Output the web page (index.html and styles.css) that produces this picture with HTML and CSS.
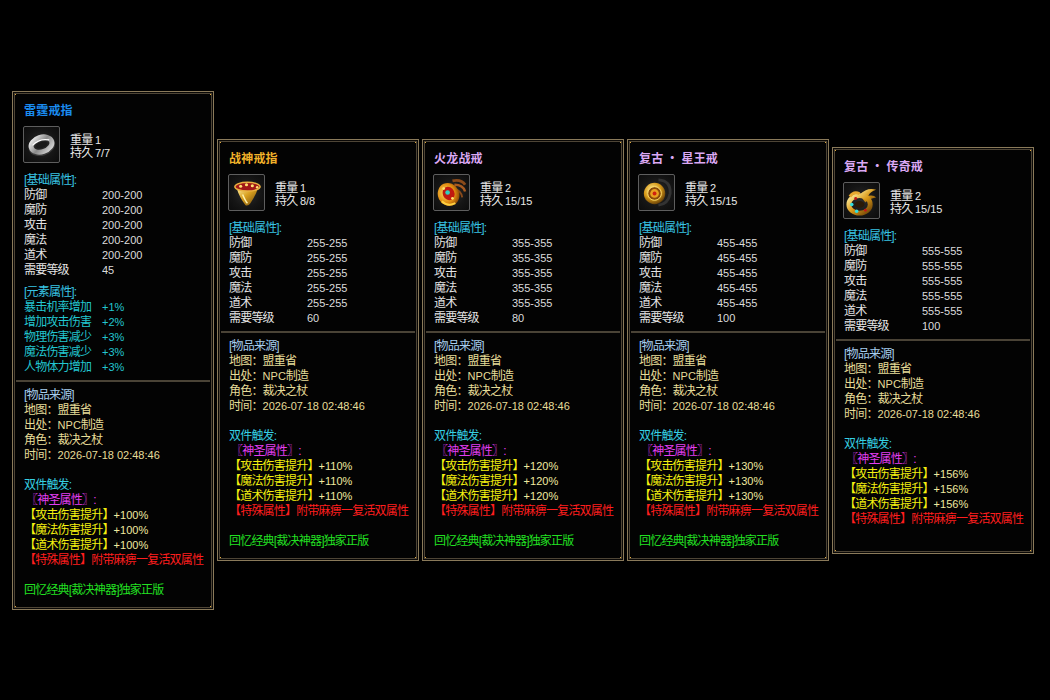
FILE: index.html
```html
<!DOCTYPE html>
<html lang="zh">
<head>
<meta charset="utf-8">
<title>戒指属性</title>
<link rel="stylesheet" href="styles.css">
</head>
<body>
<div class="stage">

  <div class="card">
    <div class="title t-blue">雷霆戒指</div>
    <div class="head">
      <div class="icon">
        <svg viewBox="0 0 36 36" width="35" height="35">
          <defs>
            <linearGradient id="sv" x1="0" y1="0" x2="1" y2="1">
              <stop offset="0" stop-color="#f4f4f4"/>
              <stop offset="0.5" stop-color="#8a8a8a"/>
              <stop offset="1" stop-color="#dcdcdc"/>
            </linearGradient>
          </defs>
          <g transform="rotate(-18 18 18)">
            <ellipse cx="18" cy="19" rx="11" ry="7.5" fill="none" stroke="#3a3a3a" stroke-width="6"/>
            <ellipse cx="18" cy="18" rx="11" ry="7.5" fill="none" stroke="url(#sv)" stroke-width="5"/>
            <path d="M9 16 Q18 11 27 16" stroke="#ffffff" stroke-width="1.2" fill="none"/>
            <ellipse cx="18" cy="18.5" rx="6" ry="3" fill="#1a1a1a"/>
          </g>
        </svg>
      </div>
      <div class="stats">
        <div>重量 <span class="num">1</span></div>
        <div>持久 <span class="num">7/7</span></div>
      </div>
    </div>
    <div class="sec-h">[基础属性]:</div>
    <div class="grid">
      <span>防御</span><span class="num">200-200</span>
      <span>魔防</span><span class="num">200-200</span>
      <span>攻击</span><span class="num">200-200</span>
      <span>魔法</span><span class="num">200-200</span>
      <span>道术</span><span class="num">200-200</span>
      <span>需要等级</span><span class="num">45</span>
    </div>
    <div class="sec-h el">[元素属性]:</div>
    <div class="grid cyan">
      <span>暴击机率增加</span><span class="num">+1%</span>
      <span>增加攻击伤害</span><span class="num">+2%</span>
      <span>物理伤害减少</span><span class="num">+3%</span>
      <span>魔法伤害减少</span><span class="num">+3%</span>
      <span>人物体力增加</span><span class="num">+3%</span>
    </div>
    <div class="sep"></div>
    <div class="src-h">[物品来源]</div>
    <div class="src">地图：盟重省</div>
    <div class="src">出处：<span class="num">NPC</span>制造</div>
    <div class="src">角色：裁决之杖</div>
    <div class="src">时间：<span class="num">2026-07-18 02:48:46</span></div>
    <div class="blank"></div>
    <div class="trig">双件触发:</div>
    <div class="holy">〖神圣属性〗:</div>
    <div class="bonus">【攻击伤害提升】<span class="pct">+100%</span></div>
    <div class="bonus">【魔法伤害提升】<span class="pct">+100%</span></div>
    <div class="bonus">【道术伤害提升】<span class="pct">+100%</span></div>
    <div class="special">【特殊属性】附带麻痹一复活双属性</div>
    <div class="blank"></div>
    <div class="promo">回忆经典[裁决神器]独家正版</div>
  </div>

  <div class="card">
    <div class="title t-gold">战神戒指</div>
    <div class="head">
      <div class="icon">
        <svg viewBox="0 0 36 36" width="35" height="35">
          <defs>
            <linearGradient id="gd2" x1="0" y1="0" x2="1" y2="1">
              <stop offset="0" stop-color="#fff0a0"/>
              <stop offset="0.45" stop-color="#d9a020"/>
              <stop offset="1" stop-color="#6a4408"/>
            </linearGradient>
          </defs>
          <path d="M8 14 Q11 24 17 31 Q20 32 22 29 Q27 22 30 13 Z" fill="url(#gd2)"/>
          <path d="M14 20 Q17 27 19 29" stroke="#fff4b0" stroke-width="1.5" fill="none"/>
          <ellipse cx="19" cy="12" rx="13" ry="4.5" fill="#a01818" stroke="#e8b040" stroke-width="1.5"/>
          <circle cx="12" cy="11.5" r="1.6" fill="#ffe070"/>
          <circle cx="18" cy="10" r="1.6" fill="#ffe070"/>
          <circle cx="24" cy="11" r="1.6" fill="#ffe070"/>
          <circle cx="29" cy="12.5" r="1.3" fill="#ffe070"/>
        </svg>
      </div>
      <div class="stats">
        <div>重量 <span class="num">1</span></div>
        <div>持久 <span class="num">8/8</span></div>
      </div>
    </div>
    <div class="sec-h">[基础属性]:</div>
    <div class="grid">
      <span>防御</span><span class="num">255-255</span>
      <span>魔防</span><span class="num">255-255</span>
      <span>攻击</span><span class="num">255-255</span>
      <span>魔法</span><span class="num">255-255</span>
      <span>道术</span><span class="num">255-255</span>
      <span>需要等级</span><span class="num">60</span>
    </div>
    <div class="sep"></div>
    <div class="src-h">[物品来源]</div>
    <div class="src">地图：盟重省</div>
    <div class="src">出处：<span class="num">NPC</span>制造</div>
    <div class="src">角色：裁决之杖</div>
    <div class="src">时间：<span class="num">2026-07-18 02:48:46</span></div>
    <div class="blank"></div>
    <div class="trig">双件触发:</div>
    <div class="holy">〖神圣属性〗:</div>
    <div class="bonus">【攻击伤害提升】<span class="pct">+110%</span></div>
    <div class="bonus">【魔法伤害提升】<span class="pct">+110%</span></div>
    <div class="bonus">【道术伤害提升】<span class="pct">+110%</span></div>
    <div class="special">【特殊属性】附带麻痹一复活双属性</div>
    <div class="blank"></div>
    <div class="promo">回忆经典[裁决神器]独家正版</div>
  </div>

  <div class="card">
    <div class="title t-lav">火龙战戒</div>
    <div class="head">
      <div class="icon">
        <svg viewBox="0 0 36 36" width="35" height="35">
          <defs>
            <radialGradient id="gd3" cx="0.4" cy="0.4" r="0.7">
              <stop offset="0" stop-color="#ffe060"/>
              <stop offset="0.6" stop-color="#e08a10"/>
              <stop offset="1" stop-color="#7a3a04"/>
            </radialGradient>
          </defs>
          <path d="M19 6 Q28 4 32 10" stroke="#8a4a1a" stroke-width="3" fill="none"/>
          <path d="M21 10 Q30 10 32 17" stroke="#a85a20" stroke-width="2.5" fill="none"/>
          <path d="M21 14 Q28 16 29 23" stroke="#8a4a1a" stroke-width="2" fill="none"/>
          <ellipse cx="15" cy="20" rx="11" ry="12" fill="url(#gd3)" transform="rotate(-25 15 20)"/>
          <ellipse cx="15" cy="19" rx="6" ry="7" fill="#c01810" transform="rotate(-25 15 19)"/>
          <circle cx="14" cy="18" r="2.4" fill="#30d0c0"/>
          <circle cx="10" cy="14" r="1.4" fill="#ffe070"/>
          <circle cx="19" cy="24" r="1.4" fill="#ffe070"/>
          <path d="M8 27 Q14 33 22 29" stroke="#ffd040" stroke-width="2" fill="none"/>
        </svg>
      </div>
      <div class="stats">
        <div>重量 <span class="num">2</span></div>
        <div>持久 <span class="num">15/15</span></div>
      </div>
    </div>
    <div class="sec-h">[基础属性]:</div>
    <div class="grid">
      <span>防御</span><span class="num">355-355</span>
      <span>魔防</span><span class="num">355-355</span>
      <span>攻击</span><span class="num">355-355</span>
      <span>魔法</span><span class="num">355-355</span>
      <span>道术</span><span class="num">355-355</span>
      <span>需要等级</span><span class="num">80</span>
    </div>
    <div class="sep"></div>
    <div class="src-h">[物品来源]</div>
    <div class="src">地图：盟重省</div>
    <div class="src">出处：<span class="num">NPC</span>制造</div>
    <div class="src">角色：裁决之杖</div>
    <div class="src">时间：<span class="num">2026-07-18 02:48:46</span></div>
    <div class="blank"></div>
    <div class="trig">双件触发:</div>
    <div class="holy">〖神圣属性〗:</div>
    <div class="bonus">【攻击伤害提升】<span class="pct">+120%</span></div>
    <div class="bonus">【魔法伤害提升】<span class="pct">+120%</span></div>
    <div class="bonus">【道术伤害提升】<span class="pct">+120%</span></div>
    <div class="special">【特殊属性】附带麻痹一复活双属性</div>
    <div class="blank"></div>
    <div class="promo">回忆经典[裁决神器]独家正版</div>
  </div>

  <div class="card">
    <div class="title t-lav">复古 · 星王戒</div>
    <div class="head">
      <div class="icon">
        <svg viewBox="0 0 36 36" width="35" height="35">
          <defs>
            <radialGradient id="gd4" cx="0.4" cy="0.35" r="0.7">
              <stop offset="0" stop-color="#fff2a0"/>
              <stop offset="0.55" stop-color="#d89a18"/>
              <stop offset="1" stop-color="#5a3606"/>
            </radialGradient>
          </defs>
          <path d="M20 5 Q33 6 32 19 Q30 30 20 31" stroke="#333" stroke-width="3" fill="none"/>
          <circle cx="16" cy="19" r="11" fill="url(#gd4)"/>
          <circle cx="16" cy="19" r="7" fill="#8a4a08" stroke="#ffe070" stroke-width="1"/>
          <circle cx="16" cy="19" r="4.5" fill="#e8a020"/>
          <circle cx="16" cy="19" r="2" fill="#d02010"/>
        </svg>
      </div>
      <div class="stats">
        <div>重量 <span class="num">2</span></div>
        <div>持久 <span class="num">15/15</span></div>
      </div>
    </div>
    <div class="sec-h">[基础属性]:</div>
    <div class="grid">
      <span>防御</span><span class="num">455-455</span>
      <span>魔防</span><span class="num">455-455</span>
      <span>攻击</span><span class="num">455-455</span>
      <span>魔法</span><span class="num">455-455</span>
      <span>道术</span><span class="num">455-455</span>
      <span>需要等级</span><span class="num">100</span>
    </div>
    <div class="sep"></div>
    <div class="src-h">[物品来源]</div>
    <div class="src">地图：盟重省</div>
    <div class="src">出处：<span class="num">NPC</span>制造</div>
    <div class="src">角色：裁决之杖</div>
    <div class="src">时间：<span class="num">2026-07-18 02:48:46</span></div>
    <div class="blank"></div>
    <div class="trig">双件触发:</div>
    <div class="holy">〖神圣属性〗:</div>
    <div class="bonus">【攻击伤害提升】<span class="pct">+130%</span></div>
    <div class="bonus">【魔法伤害提升】<span class="pct">+130%</span></div>
    <div class="bonus">【道术伤害提升】<span class="pct">+130%</span></div>
    <div class="special">【特殊属性】附带麻痹一复活双属性</div>
    <div class="blank"></div>
    <div class="promo">回忆经典[裁决神器]独家正版</div>
  </div>

  <div class="card">
    <div class="title t-lav">复古 · 传奇戒</div>
    <div class="head">
      <div class="icon">
        <svg viewBox="0 0 36 36" width="35" height="35">
          <defs>
            <linearGradient id="gd5" x1="0" y1="0" x2="1" y2="1">
              <stop offset="0" stop-color="#fff0a0"/>
              <stop offset="0.5" stop-color="#d89818"/>
              <stop offset="1" stop-color="#6a4006"/>
            </linearGradient>
          </defs>
          <path d="M16 12 Q24 4 33 7 Q27 9 25 13 Q31 12 33 15 Q26 16 22 20" fill="url(#gd5)"/>
          <ellipse cx="16" cy="22" rx="11" ry="9" fill="none" stroke="url(#gd5)" stroke-width="5"/>
          <path d="M6 14 Q10 8 16 11" stroke="#e8a830" stroke-width="3" fill="none"/>
          <circle cx="8" cy="22" r="1.8" fill="#30e0e0"/>
          <circle cx="13" cy="29" r="1.8" fill="#30e0e0"/>
          <circle cx="22" cy="28" r="1.5" fill="#c01818"/>
          <circle cx="12" cy="16" r="1.5" fill="#c01818"/>
          <ellipse cx="16" cy="22" rx="5" ry="3.5" fill="#2a1a08"/>
        </svg>
      </div>
      <div class="stats">
        <div>重量 <span class="num">2</span></div>
        <div>持久 <span class="num">15/15</span></div>
      </div>
    </div>
    <div class="sec-h">[基础属性]:</div>
    <div class="grid">
      <span>防御</span><span class="num">555-555</span>
      <span>魔防</span><span class="num">555-555</span>
      <span>攻击</span><span class="num">555-555</span>
      <span>魔法</span><span class="num">555-555</span>
      <span>道术</span><span class="num">555-555</span>
      <span>需要等级</span><span class="num">100</span>
    </div>
    <div class="sep"></div>
    <div class="src-h">[物品来源]</div>
    <div class="src">地图：盟重省</div>
    <div class="src">出处：<span class="num">NPC</span>制造</div>
    <div class="src">角色：裁决之杖</div>
    <div class="src">时间：<span class="num">2026-07-18 02:48:46</span></div>
    <div class="blank"></div>
    <div class="trig">双件触发:</div>
    <div class="holy">〖神圣属性〗:</div>
    <div class="bonus">【攻击伤害提升】<span class="pct">+156%</span></div>
    <div class="bonus">【魔法伤害提升】<span class="pct">+156%</span></div>
    <div class="bonus">【道术伤害提升】<span class="pct">+156%</span></div>
    <div class="special">【特殊属性】附带麻痹一复活双属性</div>
    <div class="blank"></div>
  </div>

</div>
</body>
</html>
```

FILE: styles.css
```css
html, body {
  margin: 0;
  padding: 0;
  background: #000;
}

.stage {
  height: 700px;
  box-sizing: border-box;
  padding-left: 12px;
  display: flex;
  align-items: center;
  gap: 3px;
}

.card {
  width: 202px;
  box-sizing: border-box;
  padding: 10px 10px 11px 11px;
  border: 1px solid #8a7a5a;
  box-shadow: inset 0 0 0 1px #0a0806, inset 0 0 0 2px #4e4536;
  background:
    linear-gradient(#e0a83a, #e0a83a) left top / 3px 3px no-repeat,
    linear-gradient(#e0a83a, #e0a83a) right top / 3px 3px no-repeat,
    linear-gradient(#e0a83a, #e0a83a) left bottom / 3px 3px no-repeat,
    linear-gradient(#e0a83a, #e0a83a) right bottom / 3px 3px no-repeat,
    #030303;
  color: #e4e4e4;
  font: 12px/15px "Liberation Sans", "Noto Sans CJK SC", sans-serif;
  letter-spacing: -0.8px;
  white-space: nowrap;
}

.title {
  font-family: "Noto Sans CJK SC", sans-serif;
  font-weight: bold;
  font-size: 12px;
  line-height: 15px;
  letter-spacing: 0.2px;
}
.t-blue { color: #1a8cf0; }
.t-gold { color: #f2b22a; }
.t-lav { color: #dba8f4; }

.head {
  display: flex;
  align-items: flex-start;
  gap: 10px;
  margin-top: 9px;
  margin-left: -1px;
}

.icon {
  width: 37px;
  height: 37px;
  box-sizing: border-box;
  border: 1px solid #5e5e5e;
  border-radius: 2px;
  background: radial-gradient(circle at 50% 50%, #2c2c2c 0%, #151515 60%, #0c0c0c 100%);
  display: flex;
  align-items: center;
  justify-content: center;
}

.stats {
  padding-top: 8px;
  line-height: 13px;
  color: #e8e8e8;
}

.num {
  font-family: "Liberation Sans", sans-serif;
  font-size: 11px;
  letter-spacing: 0;
}

.sec-h {
  margin-top: 10px;
  color: #38c4e4;
}
.sec-h.el {
  margin-top: 7px;
}

.grid {
  display: grid;
  grid-template-columns: 78px 1fr;
}
.grid .num { color: #dcdcdc; }
.grid.cyan, .grid.cyan .num { color: #22c6d0; }

.sep {
  height: 2px;
  background: #4a4336;
  margin: 5px -7px 6px -8px;
}

.src-h { color: #a6cdee; }
.src { color: #e6dc98; }
.src .num { color: #e6dc98; }

.blank { height: 15px; }

.trig { color: #36d0e4; }
.holy { color: #e23ef0; padding-left: 2px; }
.bonus { color: #f4f010; }
.pct {
  font-family: "Liberation Sans", sans-serif;
  font-size: 11px;
  letter-spacing: 0;
  color: #efe9a0;
}
.special { color: #ff1e1e; }
.promo { color: #22e022; }
```
